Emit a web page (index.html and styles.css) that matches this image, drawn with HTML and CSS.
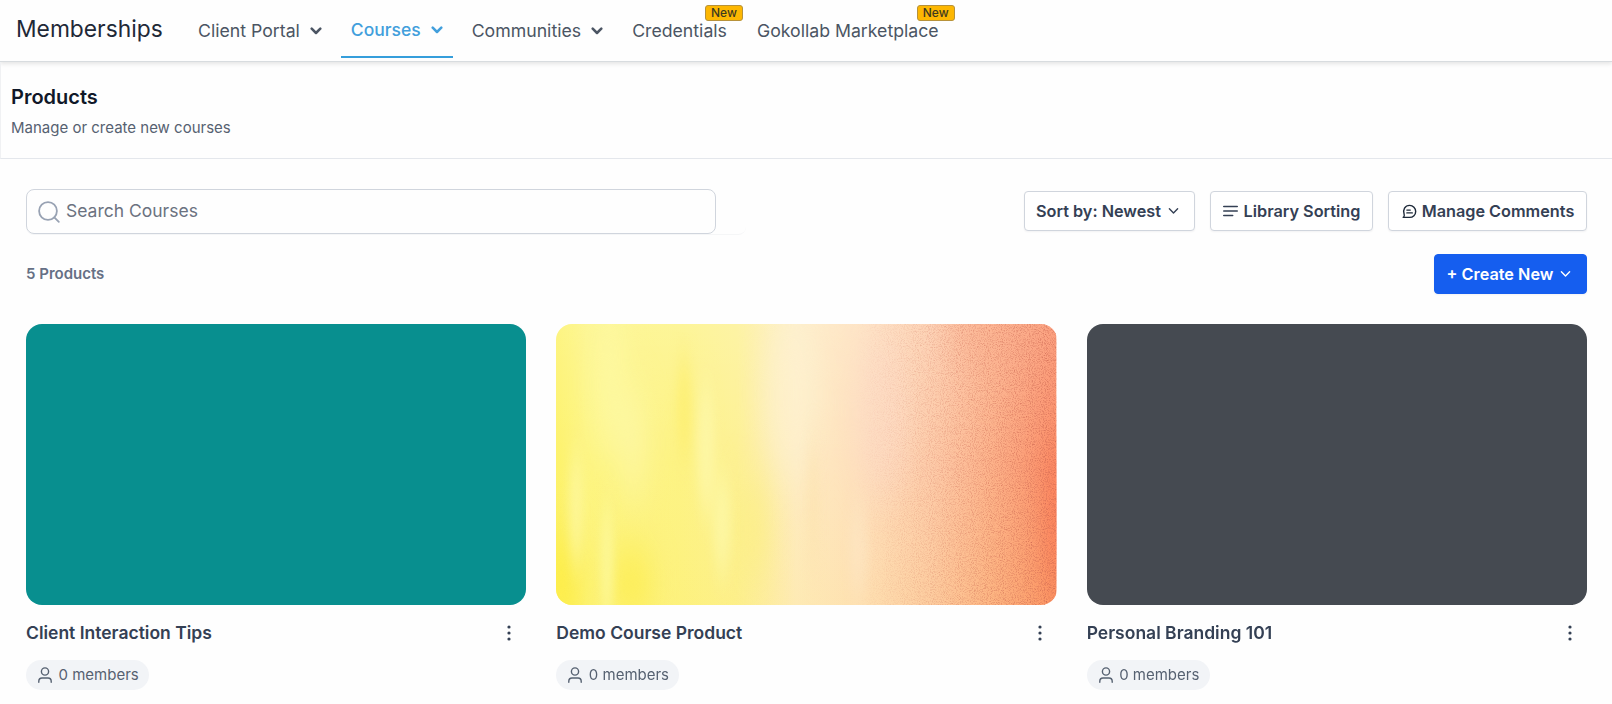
FILE: index.html
```html
<!DOCTYPE html>
<html lang="en">
<head>
    <meta charset="UTF-8">
    <meta name="viewport" content="width=device-width, initial-scale=1.0">
    <title>Memberships</title>
    <link rel="stylesheet" href="styles.css">
</head>
<body>
    <header class="topbar">
        <h1 class="brand">Memberships</h1>
        <nav class="nav">
            <a class="nav-item portal">Client Portal
                <svg class="chevron" viewBox="0 0 12 8"><path d="M1.7 1.7 6 6l4.3-4.3"/></svg>
            </a>
            <a class="nav-item active">Courses
                <svg class="chevron" viewBox="0 0 12 8"><path d="M1.7 1.7 6 6l4.3-4.3"/></svg>
            </a>
            <a class="nav-item communities">Communities
                <svg class="chevron" viewBox="0 0 12 8"><path d="M1.7 1.7 6 6l4.3-4.3"/></svg>
            </a>
            <a class="nav-item credentials">Credentials<span class="badge">New</span></a>
            <a class="nav-item market">Gokollab Marketplace<span class="badge">New</span></a>
        </nav>
    </header>

    <section class="page-head">
        <h2>Products</h2>
        <p>Manage or create new courses</p>
    </section>

    <main class="content">
        <div class="toolbar">
            <div class="search-wrap">
                <label class="search">
                    <svg class="search-icon" viewBox="0 0 22 22"><circle cx="10" cy="10" r="8.9"/><path d="m16.3 16.3 4.500 4.500"/></svg>
                    <input type="text" placeholder="Search Courses">
                </label>
            </div>
            <div class="actions">
                <button class="btn btn-sort">Sort by: Newest
                    <svg class="caret" viewBox="0 0 12 8"><path d="m1.500 1.500 4.500 4.700 4.500-4.700"/></svg>
                </button>
                <button class="btn btn-library">
                    <svg class="lines" viewBox="0 0 15 12"><path d="M.7 1.500h13.600M.7 6h13.600M.7 10.500h9"/></svg>
                    Library Sorting
                </button>
                <button class="btn btn-comments">
                    <svg class="comment" viewBox="0 0 16 16"><path d="M1.300 14.300c1.400-.8 1.500-1.700 1-3C.4 6.200 3.300 1.500 8.200 1.500a6.400 6.400 0 1 1 0 12.800z"/><path d="M5.200 6.500h3.600M5.200 9.500h5.800"/></svg>
                    Manage Comments
                </button>
            </div>
        </div>

        <div class="summary">
            <span class="count">5 Products</span>
            <button class="btn btn-create">+ Create New
                <svg class="caret" viewBox="0 0 12 8"><path d="m1.500 1.500 4.500 4.700 4.500-4.700"/></svg>
            </button>
        </div>

        <div class="grid">
            <article class="card">
                <div class="cover teal"></div>
                <div class="card-row">
                    <h3>Client Interaction Tips</h3>
                    <svg class="dots" viewBox="0 0 4 16"><circle cx="2" cy="2" r="1.6"/><circle cx="2" cy="8" r="1.6"/><circle cx="2" cy="14" r="1.6"/></svg>
                </div>
                <span class="members">
                    <svg class="user" viewBox="0 0 14 16"><circle cx="7" cy="4.5" r="3.6"/><path d="M.8 15.300v-1.100c0-1.900 1.300-3.200 3.200-3.200h6c1.900 0 3.200 1.300 3.200 3.200v1.100"/></svg>
                    0 members
                </span>
            </article>
            <article class="card">
                <svg class="cover" viewBox="0 0 500 281" preserveAspectRatio="none">
                    <defs>
                        <linearGradient id="base">
                            <stop offset="0" stop-color="#fdf26b"/>
                            <stop offset=".06" stop-color="#fdf580"/>
                            <stop offset=".25" stop-color="#fdf385"/>
                            <stop offset=".36" stop-color="#fdf193"/>
                            <stop offset=".48" stop-color="#feebc0"/>
                            <stop offset=".62" stop-color="#fedfbc"/>
                            <stop offset=".75" stop-color="#fdcba9"/>
                            <stop offset=".87" stop-color="#fdb28a"/>
                            <stop offset="1" stop-color="#fc8f68"/>
                        </linearGradient>
                        <linearGradient id="fade" x2="0" y2="1">
                            <stop offset="0" stop-color="#fff" stop-opacity=".16"/>
                            <stop offset=".5" stop-color="#fff" stop-opacity="0"/>
                            <stop offset=".5" stop-color="#fbdf28" stop-opacity="0"/>
                            <stop offset="1" stop-color="#fbdf28" stop-opacity=".08"/>
                        </linearGradient>
                        <linearGradient id="grain-fade">
                            <stop offset=".6" stop-color="#000"/>
                            <stop offset=".8" stop-color="#777"/>
                            <stop offset="1" stop-color="#ddd"/>
                        </linearGradient>
                        <mask id="grain-mask"><rect width="500" height="281" fill="url(#grain-fade)"/></mask>
                        <filter id="soft" x="-10%" y="-10%" width="120%" height="120%" color-interpolation-filters="sRGB"><feGaussianBlur stdDeviation="12 24"/></filter>
                        <filter id="soft-thin" x="-10%" y="-10%" width="120%" height="120%" color-interpolation-filters="sRGB"><feGaussianBlur stdDeviation="5 18"/></filter>
                        <filter id="grain" x="0" y="0" width="100%" height="100%" color-interpolation-filters="sRGB">
                            <feTurbulence type="fractalNoise" baseFrequency=".93" numOctaves="3" seed="4"/>
                            <feColorMatrix values="0 0 0 0 .78  0 0 0 0 .38  0 0 0 0 .3  2 0 0 0 -.9"/>
                        </filter>
                    </defs>
                    <rect width="500" height="281" fill="url(#base)"/>
                    <rect width="500" height="281" fill="url(#fade)"/>
                    <g filter="url(#soft)">
                        <ellipse cx="53" cy="60" rx="15" ry="80" fill="#fdf9a8" opacity=".7"/>
                        <ellipse cx="78" cy="120" rx="11" ry="60" fill="#fdf8ac" opacity=".8"/>
                        <ellipse cx="5" cy="260" rx="22" ry="50" fill="#fcec42" opacity=".8"/>
                        <ellipse cx="75" cy="260" rx="22" ry="35" fill="#fcec4c" opacity=".8"/>
                        <ellipse cx="198" cy="205" rx="14" ry="55" fill="#fcee7c" opacity=".6"/>
                        <ellipse cx="235" cy="70" rx="28" ry="90" fill="#fef2d2" opacity=".6"/>
                        <ellipse cx="325" cy="90" rx="28" ry="80" fill="#fddac8" opacity=".5"/>
                        <ellipse cx="440" cy="0" rx="50" ry="50" fill="#fba585" opacity=".35"/>
                        <ellipse cx="504" cy="195" rx="12" ry="80" fill="#fc7454" opacity=".6"/>
                    </g>
                    <g filter="url(#soft-thin)">
                        <ellipse cx="20" cy="185" rx="7" ry="60" fill="#fdf8ac" opacity=".6"/>
                        <ellipse cx="51" cy="240" rx="6" ry="60" fill="#fdf9a0" opacity=".8"/>
                        <ellipse cx="128" cy="85" rx="8" ry="50" fill="#fdee6c" opacity=".7"/>
                        <ellipse cx="150" cy="125" rx="9" ry="65" fill="#fdf8ac" opacity=".7"/>
                        <ellipse cx="166" cy="200" rx="9" ry="50" fill="#fdf7a6" opacity=".8"/>
                        <ellipse cx="257" cy="180" rx="5" ry="65" fill="#fde1ac" opacity=".5"/>
                        <ellipse cx="302" cy="225" rx="9" ry="45" fill="#fee6c4" opacity=".6"/>
                    </g>
                    <g mask="url(#grain-mask)"><rect width="500" height="281" filter="url(#grain)"/></g>
                </svg>
                <div class="card-row">
                    <h3>Demo Course Product</h3>
                    <svg class="dots" viewBox="0 0 4 16"><circle cx="2" cy="2" r="1.6"/><circle cx="2" cy="8" r="1.6"/><circle cx="2" cy="14" r="1.6"/></svg>
                </div>
                <span class="members">
                    <svg class="user" viewBox="0 0 14 16"><circle cx="7" cy="4.5" r="3.6"/><path d="M.8 15.300v-1.100c0-1.900 1.300-3.200 3.200-3.200h6c1.900 0 3.200 1.300 3.200 3.200v1.100"/></svg>
                    0 members
                </span>
            </article>
            <article class="card">
                <div class="cover slate"></div>
                <div class="card-row">
                    <h3>Personal Branding 101</h3>
                    <svg class="dots" viewBox="0 0 4 16"><circle cx="2" cy="2" r="1.6"/><circle cx="2" cy="8" r="1.6"/><circle cx="2" cy="14" r="1.6"/></svg>
                </div>
                <span class="members">
                    <svg class="user" viewBox="0 0 14 16"><circle cx="7" cy="4.5" r="3.6"/><path d="M.8 15.300v-1.100c0-1.900 1.300-3.200 3.200-3.200h6c1.900 0 3.200 1.300 3.200 3.200v1.100"/></svg>
                    0 members
                </span>
            </article>
        </div>
    </main>
</body>
</html>
```
FILE: styles.css
```css
* {
    box-sizing: border-box;
}
body {
    margin: 0;
    font-family: Inter, "Liberation Sans", sans-serif;
    color: #344054;
    background-color: #fefefe;
    overflow: hidden;
}
h1, h2, h3, p {
    margin: 0;
}
svg {
    display: block;
    flex: none;
    fill: none;
    stroke: currentColor;
    stroke-linecap: round;
    stroke-linejoin: round;
}

/* top navigation */
.topbar {
    display: flex;
    height: 62px;
    padding-left: 16px;
    border-bottom: 1px solid #d8dcdf;
    box-shadow: 0 2px 4px rgba(0,0,0,0.1);
}
.brand {
    width: 172px;
    font-size: 22.8px;
    font-weight: 400;
    line-height: 58px;
    color: #1f2937;
}
.nav {
    display: flex;
    height: 58px;
}
.nav-item {
    position: relative;
    display: flex;
    align-items: center;
    gap: 10px;
    padding: 3px 10px 0;
    font-size: 17.7px;
    font-weight: 400;
    white-space: nowrap;
    color: #4b5563;
}
.nav-item.active {
    margin: 0 9px;
    border-bottom: 2px solid #359edb;
    font-size: 17.5px;
    font-weight: 500;
    color: #429fdc;
}
.chevron {
    width: 12px;
    height: 8px;
    stroke-width: 2.5;
}
.credentials {
    margin-left: 9px;
}
.market {
    margin-left: 10px;
}
.badge {
    position: absolute;
    top: 5px;
    right: -6px;
    width: 38px;
    height: 16px;
    border: 1px solid #b7923a;
    border-radius: 3px;
    background-color: #fdb702;
    font-size: 12px;
    font-weight: 500;
    line-height: 14px;
    text-align: center;
    color: #3d3a20;
}

/* page heading */
.page-head {
    height: 97px;
    padding: 23px 10px 0;
    border-bottom: 1px solid #e4e7ec;
    border-left: 1px solid #f0f1f3;
}
.page-head h2 {
    font-size: 20px;
    font-weight: 600;
    line-height: 24px;
    color: #101828;
}
.page-head p {
    margin-top: 9px;
    font-size: 15px;
    line-height: 20px;
    color: #566171;
}

.content {
    padding: 30px 25px 0 26px;
}
.toolbar {
    display: flex;
    justify-content: space-between;
}
.search-wrap {
    width: 720px;
    height: 46px;
    border-bottom: 1px solid #f5f6f7;
    border-radius: 8px;
}
.search {
    display: flex;
    align-items: center;
    gap: 6px;
    width: 690px;
    height: 45px;
    padding: 0 11px;
    border: 1px solid #d0d5dd;
    border-radius: 8px;
}
.search-icon {
    width: 22px;
    height: 22px;
    stroke-width: 1.8;
    color: #98a2b3;
}
.search input {
    flex-grow: 1;
    padding: 0 0 2px;
    border: none;
    outline: none;
    background: transparent;
    font-family: inherit;
    font-size: 17.5px;
}
.search input::placeholder {
    color: #6b7280;
}
.actions {
    display: flex;
    gap: 15px;
    padding-top: 2px;
}
.btn {
    display: flex;
    align-items: center;
    justify-content: center;
    height: 40px;
    padding: 0;
    border: 1px solid #d0d5dd;
    border-radius: 4px;
    background-color: #fff;
    box-shadow: 0 1px 2px rgba(16,24,40,0.05);
    font-family: inherit;
    font-size: 16.25px;
    font-weight: 600;
    white-space: nowrap;
    color: #344054;
}
.btn-sort {
    gap: 7px;
    width: 171px;
    padding-right: 4px;
}
.btn-library {
    gap: 6px;
    width: 163px;
}
.btn-comments {
    gap: 5px;
    width: 199px;
    padding-left: 1px;
}
.caret {
    width: 11px;
    height: 8px;
    stroke-width: 1.5;
}
.lines {
    width: 15px;
    height: 12px;
    stroke-width: 1.5;
}
.comment {
    width: 15px;
    height: 15px;
    stroke-width: 1.5;
    color: #1d2939;
}

.summary {
    display: flex;
    align-items: center;
    justify-content: space-between;
    margin-top: 19px;
}
.count {
    padding-bottom: 1px;
    font-size: 15px;
    font-weight: 600;
    color: #667085;
}
.btn-create {
    gap: 7px;
    width: 153px;
    padding-right: 3px;
    border-color: #155eef;
    background-color: #155eef;
    color: #fff;
}

/* product cards */
.grid {
    display: grid;
    grid-template-columns: repeat(3, 1fr);
    gap: 30px;
    margin-top: 30px;
}
.cover {
    width: 100%;
    height: 281px;
    border-radius: 16px;
    overflow: hidden;
    stroke: none;
}
.teal {
    background-color: #088f8f;
}
.slate {
    background-color: #454a51;
}
.card-row {
    display: flex;
    align-items: center;
    justify-content: space-between;
    height: 24px;
    margin-top: 16px;
    padding-right: 15px;
}
.card h3 {
    font-size: 17.5px;
    font-weight: 600;
    line-height: 24px;
}
.dots {
    width: 4px;
    height: 16px;
    fill: #344054;
    stroke: none;
}
.members {
    display: flex;
    align-items: center;
    gap: 6.5px;
    width: 123px;
    height: 30px;
    margin-top: 15px;
    padding: 0 0 1px 12px;
    border-radius: 15px;
    background-color: #f2f4f7;
    font-size: 15px;
    white-space: nowrap;
    color: #566171;
}
.user {
    width: 14px;
    height: 16px;
    stroke-width: 1.4;
}
```
